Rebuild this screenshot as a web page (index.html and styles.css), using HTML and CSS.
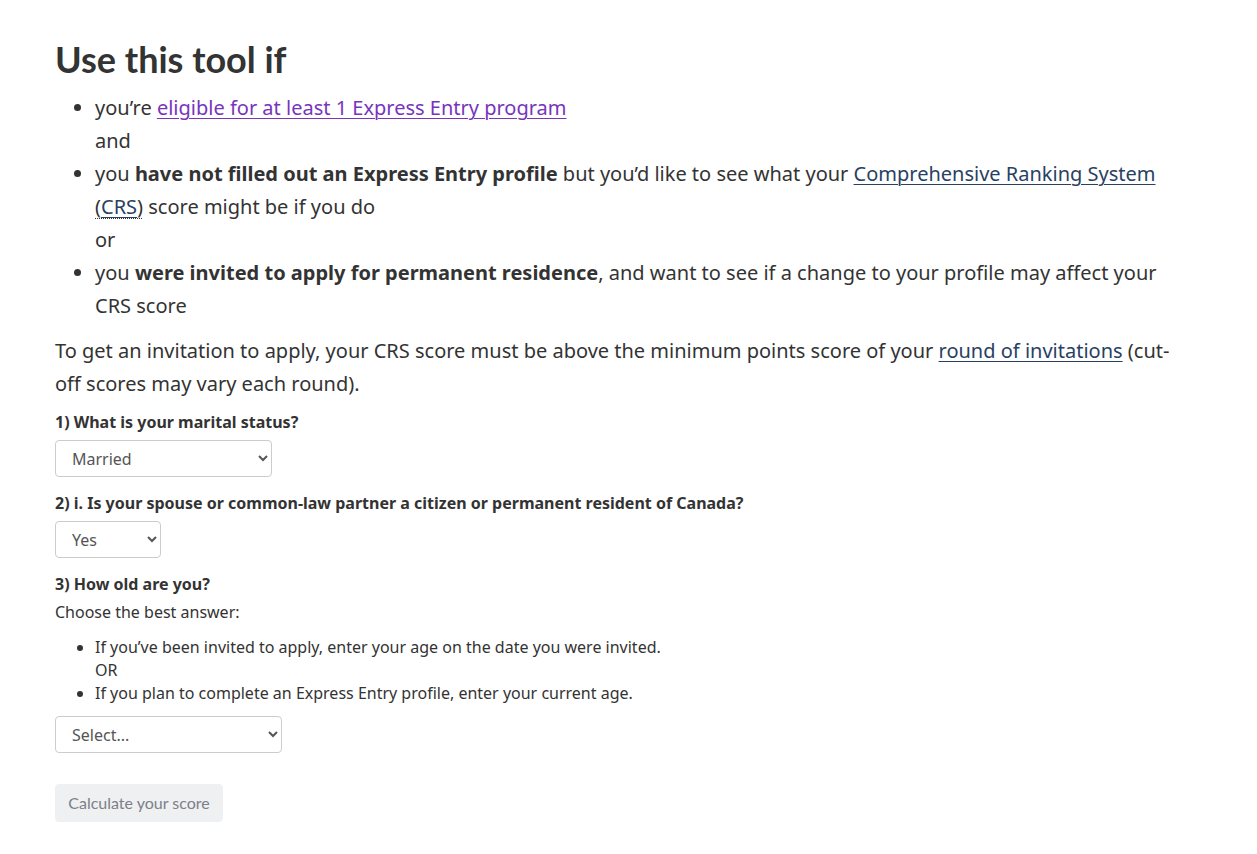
FILE: index.html
```html
<!DOCTYPE html>
<html lang="en">
<head>
<meta charset="utf-8">
<title>CRS tool</title>
<link rel="stylesheet" href="styles.css">
</head>
<body>
<main class="page">
  <h2 class="title">Use this tool if</h2>
  <ul class="intro-list">
    <li>you’re <a class="link visited" href="#">eligible for at least 1 Express Entry program</a><br>and</li>
    <li>you <strong>have not filled out an Express Entry profile</strong> but you’d like to see what your <a class="link" href="#">Comprehensive Ranking System</a> <abbr class="abbr" title="Comprehensive Ranking System">(<a class="link" href="#">CRS</a>)</abbr> score might be if you do<br>or</li>
    <li>you <strong>were invited to apply for permanent residence</strong>, and want to see if a change to your profile may affect your CRS score</li>
  </ul>
  <p class="lead">To get an invitation to apply, your CRS score must be above the minimum points score of your <a class="link" href="#">round of invitations</a> (cut-off scores may vary each round).</p>

  <form class="form">
    <div class="group">
      <label class="label" for="q1">1) What is your marital status?</label>
      <select id="q1" class="select s1"><option>Married</option></select>
    </div>
    <div class="group">
      <label class="label" for="q2">2) i. Is your spouse or common-law partner a citizen or permanent resident of Canada?</label>
      <select id="q2" class="select s2"><option>Yes</option></select>
    </div>
    <div class="group">
      <label class="label tight" for="q3">3) How old are you?</label>
      <p class="hint">Choose the best answer:</p>
      <ul class="small-list">
        <li>If you’ve been invited to apply, enter your age on the date you were invited.<br>OR</li>
        <li>If you plan to complete an Express Entry profile, enter your current age.</li>
      </ul>
      <select id="q3" class="select s3"><option>Select...</option></select>
    </div>
    <button type="button" class="btn" disabled>Calculate your score</button>
  </form>
</main>
</body>
</html>
```

FILE: styles.css
```css
html, body {
  margin: 0;
  padding: 0;
  background: #fff;
}
body {
  font-family: "Noto Sans", "DejaVu Sans", sans-serif;
  color: #333;
  font-size: 20px;
  line-height: 33px;
}
.page {
  max-width: 1140px;
  padding: 40px 0 40px 55px;
}
.title {
  font-family: Lato, "Liberation Sans", sans-serif;
  font-weight: 700;
  font-size: 36px;
  line-height: 39px;
  margin: 0 0 12px;
  color: #333;
}
.intro-list {
  margin: 0 0 11.5px;
  padding-left: 40px;
}
.link {
  color: #284162;
  text-decoration: underline;
  text-decoration-thickness: 1px;
  text-underline-offset: 3px;
}
.link.visited {
  color: #7834bc;
}
.abbr {
  text-decoration: underline dotted;
  text-decoration-thickness: 1px;
  text-underline-offset: 4px;
}
.lead {
  margin: 0 0 11.5px;
}
.form {
  margin: 0;
}
.group {
  margin-bottom: 15px;
}
.label {
  display: block;
  font-weight: 700;
  font-size: 16px;
  line-height: 23px;
  margin-bottom: 6px;
}
.label.tight {
  margin-bottom: 5px;
}
.select {
  display: block;
  height: 37px;
  font-family: "Noto Sans", "DejaVu Sans", sans-serif;
  font-size: 16px;
  color: #555;
  background: #fff;
  border: 1px solid #ccc;
  border-radius: 4px;
  padding: 6px 8px 6px 12px;
}
.s1 { width: 217px; }
.s2 { width: 106px; }
.s3 { width: 227px; }
.hint {
  font-size: 16px;
  line-height: 23px;
  margin: 0 0 12px;
}
.small-list {
  font-size: 16px;
  line-height: 23px;
  margin: 0 0 10.5px;
  padding-left: 40px;
}
.btn {
  margin-top: 16px;
  width: 168px;
  height: 38px;
  font-family: Lato, "Liberation Sans", sans-serif;
  font-size: 16px;
  color: #7b8089;
  background: #eef0f2;
  border: 1px solid #eef0f2;
  border-radius: 4px;
  padding: 6px 12px;
}
```
